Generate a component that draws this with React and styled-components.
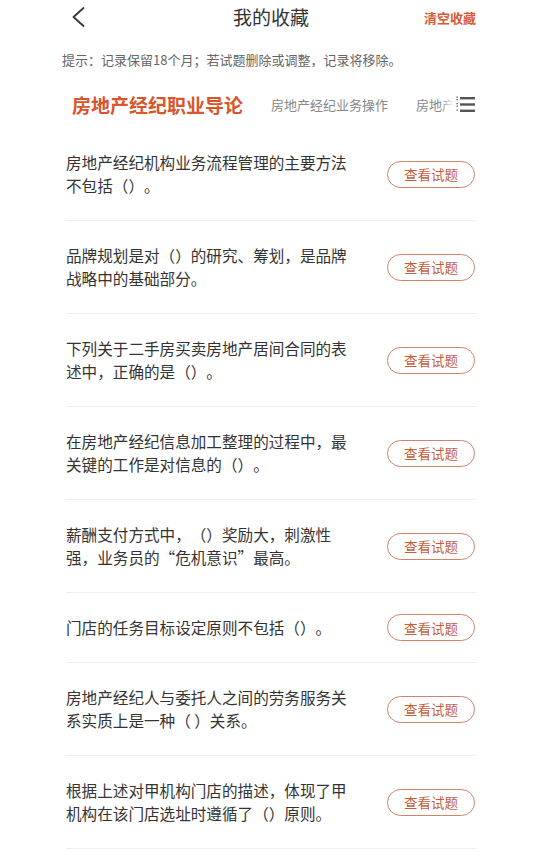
import React from 'react'
import styled, { createGlobalStyle } from 'styled-components'

const GlobalStyle = createGlobalStyle`
  html, body {
    margin: 0;
    padding: 0;
    background: #fff;
  }
  body {
    font-family: "Noto Sans CJK SC", "Noto Sans", sans-serif;
    color: #333;
    text-spacing-trim: space-all;
  }
`

const Page = styled.div`
  width: 410px;
  margin-left: 66px;
  padding-bottom: 20px;
`

const Header = styled.div`
  height: 30px;
  display: grid;
  grid-template-columns: 1fr auto 1fr;
  align-items: center;
`

const BackButton = styled.div`
  display: flex;
  align-items: center;
  padding-left: 6px;
  height: 30px;
`

const Title = styled.div`
  font-size: 19px;
  line-height: 30px;
  color: #333;
`

const ClearButton = styled.div`
  justify-self: end;
  font-size: 13px;
  font-weight: 700;
  color: #d65a33;
  line-height: 30px;
  padding-top: 3px;
`

const Notice = styled.div`
  margin-left: -4px;
  padding: 20px 0 10px;
  font-size: 13px;
  line-height: 20px;
  color: #666;
`

const TabBar = styled.div`
  position: relative;
  height: 48px;
  display: flex;
  align-items: center;
  overflow: hidden;
`

const TabTrack = styled.div`
  display: flex;
  align-items: center;
  gap: 28px;
  padding-left: 6px;
  white-space: nowrap;
`

const Tab = styled.div`
  font-size: ${p => (p.$active ? '19px' : '13px')};
  font-weight: ${p => (p.$active ? 700 : 400)};
  color: ${p => (p.$active ? '#d9552c' : '#888')};
  flex-shrink: 0;
`

const MenuButton = styled.div`
  position: absolute;
  right: 0;
  top: 0;
  bottom: 0;
  width: 36px;
  display: flex;
  align-items: center;
  justify-content: flex-end;
  background: linear-gradient(to right, rgba(255,255,255,0) 0, #fff 14px);
`

const List = styled.div`
  display: flex;
  flex-direction: column;
`

const Row = styled.div`
  display: flex;
  align-items: center;
  justify-content: space-between;
  padding: 20.5px 0;
  border-bottom: 1px solid #eeeeee;
`

const Question = styled.div`
  width: 284px;
  padding: 2.5px 0;
  font-size: 15.6px;
  line-height: 23px;
  color: #333;
`

const ViewButton = styled.div`
  width: 86px;
  height: 25px;
  margin-right: 1px;
  border: 1.5px solid #d28469;
  border-radius: 15px;
  display: flex;
  align-items: center;
  justify-content: center;
  font-size: 13.5px;
  color: #c45f3d;
`

const questions = [
  '房地产经纪机构业务流程管理的主要方法不包括（）。',
  '品牌规划是对（）的研究、筹划，是品牌战略中的基础部分。',
  '下列关于二手房买卖房地产居间合同的表述中，正确的是（）。',
  '在房地产经纪信息加工整理的过程中，最关键的工作是对信息的（）。',
  '薪酬支付方式中，（）奖励大，刺激性强，业务员的“危机意识”最高。',
  '门店的任务目标设定原则不包括（）。',
  '房地产经纪人与委托人之间的劳务服务关系实质上是一种（ ）关系。',
  '根据上述对甲机构门店的描述，体现了甲机构在该门店选址时遵循了（）原则。',
]

const tabs = ['房地产经纪职业导论', '房地产经纪业务操作', '房地产经纪相关知识']

export default function App() {
  return (
    <>
      <GlobalStyle />
      <Page>
        <Header>
          <BackButton>
            <svg width="13" height="20" viewBox="0 0 13 20">
              <polyline points="11.5,1 1.5,10 11.5,19" fill="none" stroke="#333" strokeWidth="1.7" strokeLinecap="round" strokeLinejoin="round" />
            </svg>
          </BackButton>
          <Title>我的收藏</Title>
          <ClearButton>清空收藏</ClearButton>
        </Header>
        <Notice>提示：记录保留18个月；若试题删除或调整，记录将移除。</Notice>
        <TabBar>
          <TabTrack>
            {tabs.map((t, i) => (
              <Tab key={i} $active={i === 0}>{t}</Tab>
            ))}
          </TabTrack>
          <MenuButton>
            <svg width="20" height="18" viewBox="0 0 20 18">
              <rect x="0.5" y="1.5" width="1.3" height="1.3" fill="#555" />
              <rect x="0.5" y="4" width="1.3" height="1.3" fill="#555" />
              <rect x="0.5" y="8" width="1.3" height="1.3" fill="#555" />
              <rect x="0.5" y="10.5" width="1.3" height="1.3" fill="#555" />
              <rect x="0.5" y="14.5" width="1.3" height="1.3" fill="#555" />
              <rect x="4" y="2" width="15" height="2.4" fill="#555" />
              <rect x="4" y="8.3" width="15" height="2.4" fill="#555" />
              <rect x="4" y="14.6" width="15" height="2.4" fill="#555" />
            </svg>
          </MenuButton>
        </TabBar>
        <List>
          {questions.map((q, i) => (
            <Row key={i}>
              <Question>{q}</Question>
              <ViewButton>查看试题</ViewButton>
            </Row>
          ))}
        </List>
      </Page>
    </>
  )
}
